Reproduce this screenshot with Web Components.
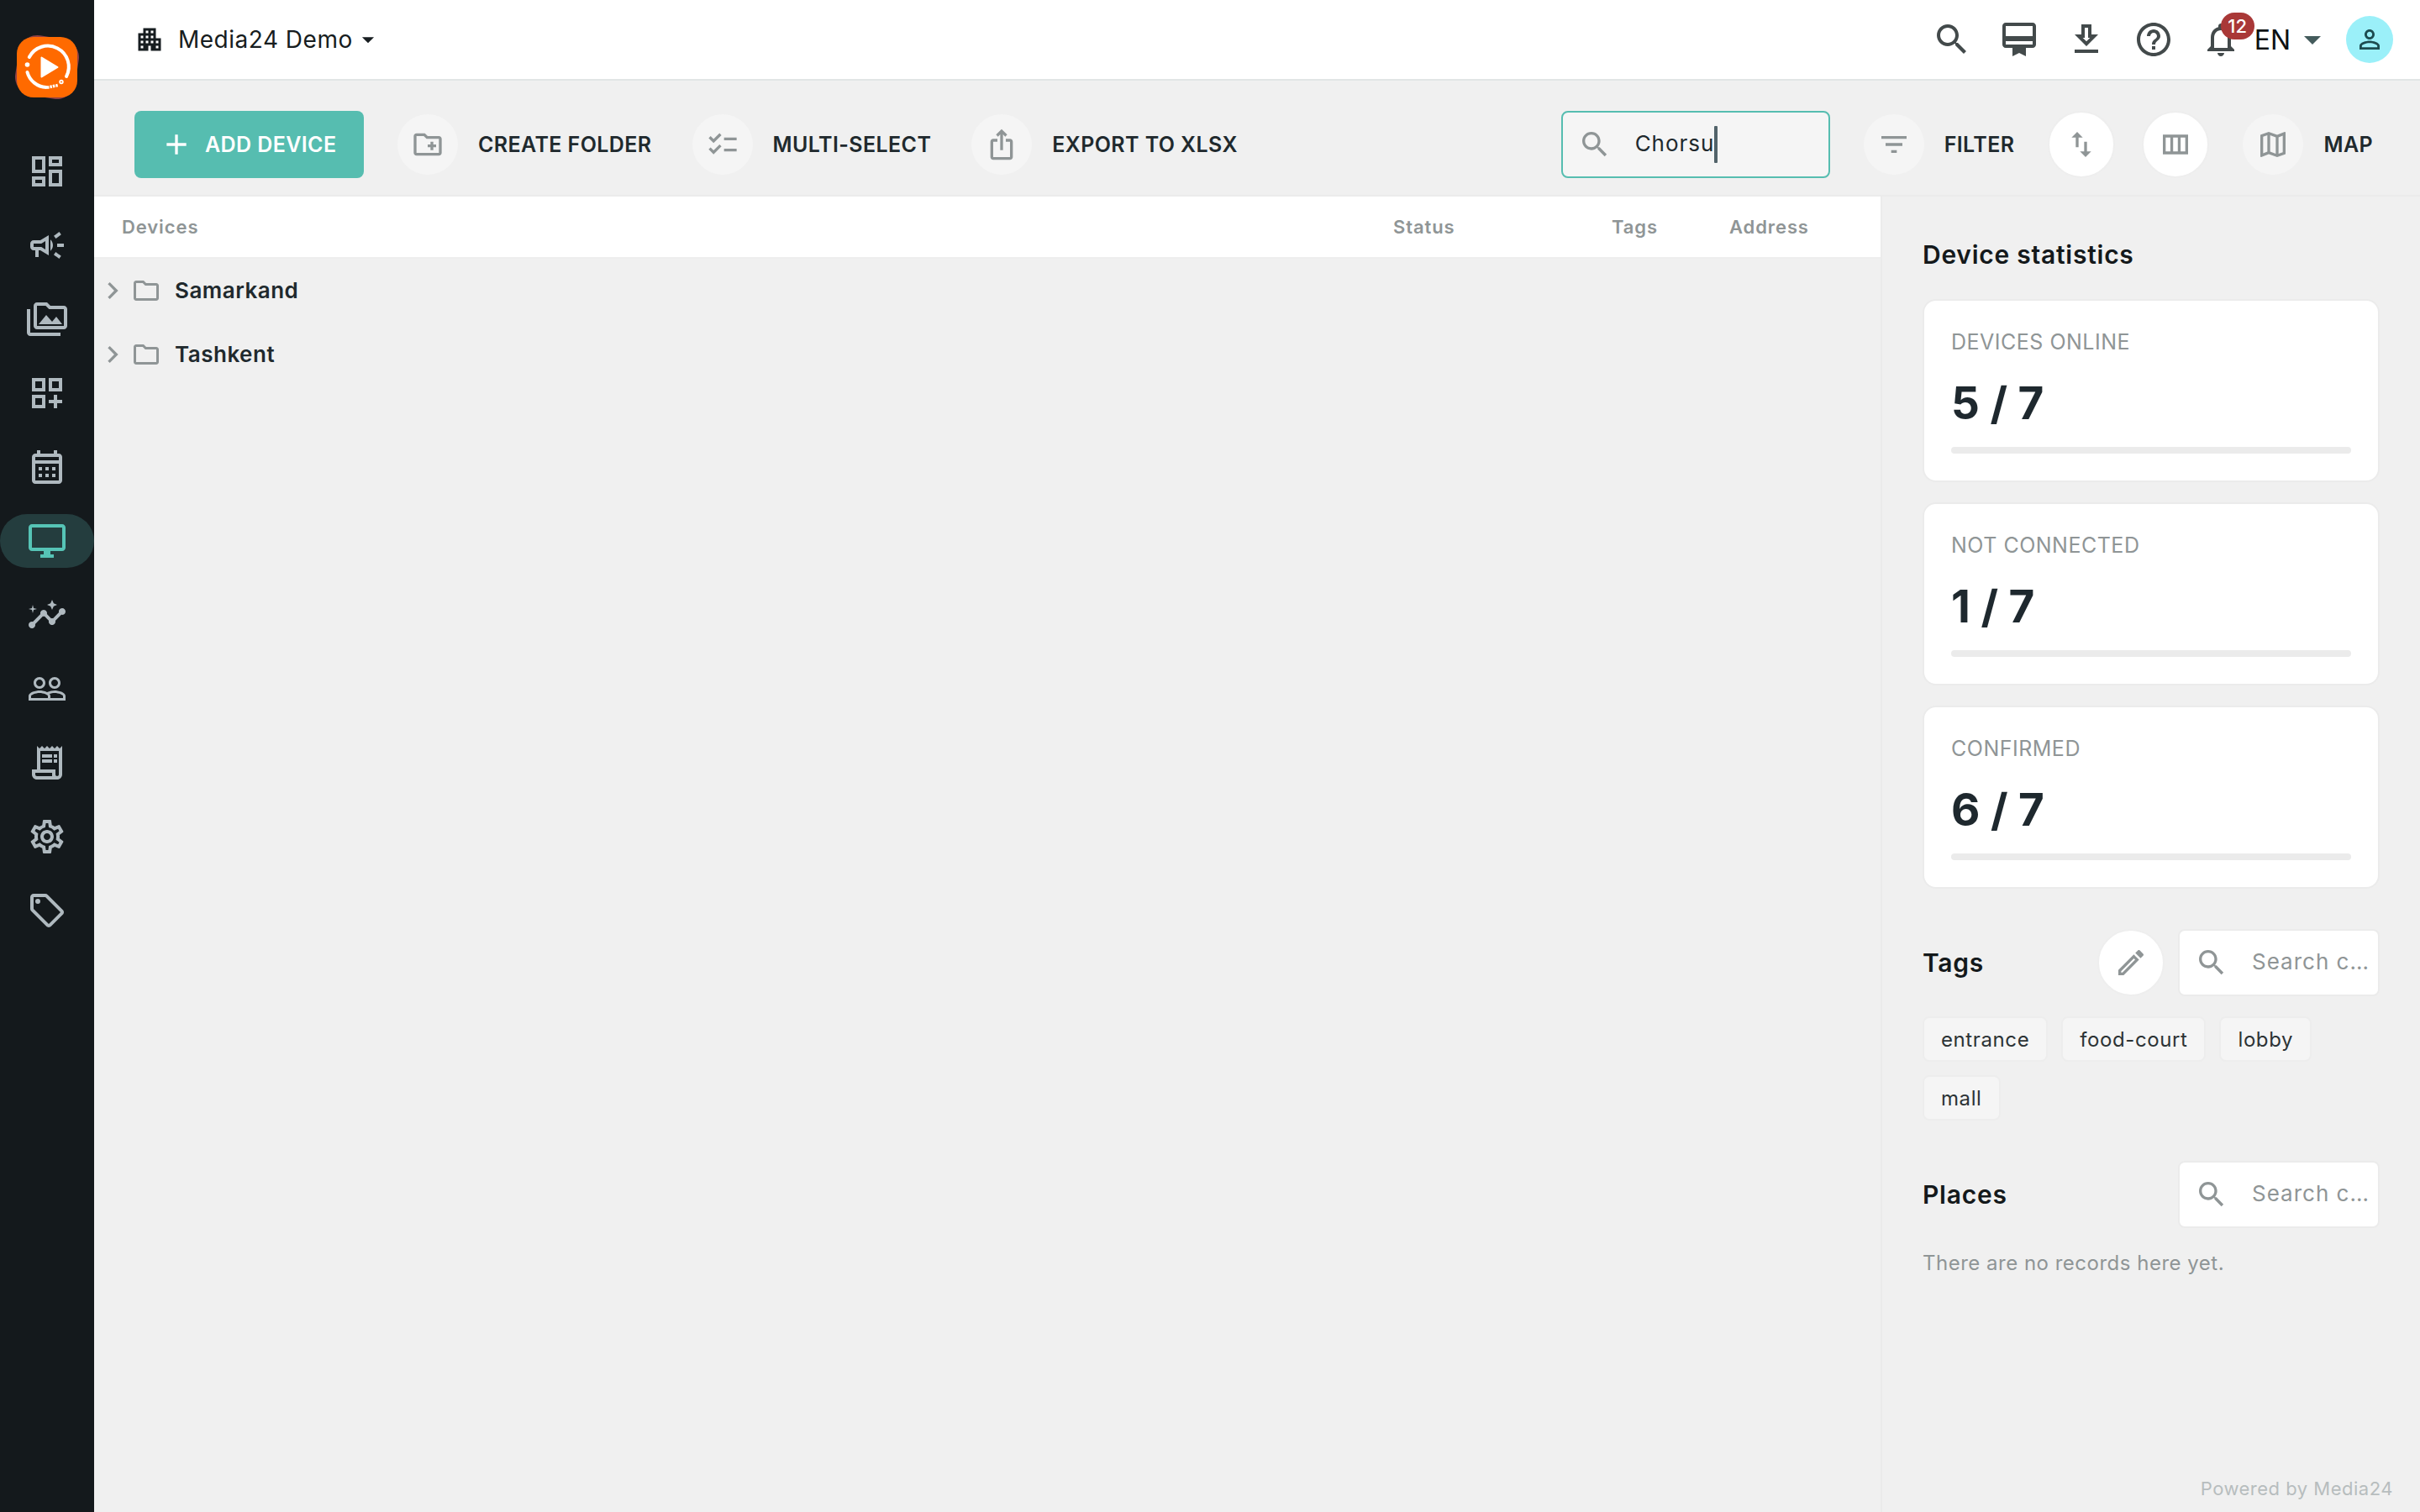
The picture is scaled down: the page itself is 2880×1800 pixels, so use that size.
<!DOCTYPE html>
<html lang="en">
<head>
<meta charset="utf-8">
<title>Devices</title>
<style>
  html, body { margin: 0; height: 100%; }
  body {
    font-family: Inter, "Liberation Sans", sans-serif;
    background: #f0f0f0;
    color: #20292d;
    --muted: #8f9596;
    --line: #ebebeb;
    --accent: #56bdb0;
  }
</style>
</head>
<body>
<device-page></device-page>

<script>
const ICONS = {
  dashboard: "M19 5v2h-4V5h4M9 5v6H5V5h4m10 8v6h-4v-6h4M9 17v2H5v-2h4M21 3h-8v6h8V3zM11 3H3v10h8V3zm10 8h-8v10h8V11zm-10 4H3v6h8v-6z",
  campaign: "M18 11v2h4v-2h-4zm-2 6.61c.96.71 2.21 1.65 3.2 2.39.4-.53.8-1.07 1.2-1.6-.99-.74-2.24-1.68-3.2-2.4-.4.54-.8 1.08-1.2 1.61zM20.4 5.6c-.4-.53-.8-1.07-1.2-1.6-.99.74-2.24 1.68-3.2 2.4.4.53.8 1.07 1.2 1.6.96-.72 2.21-1.65 3.2-2.4zM4 9c-1.1 0-2 .9-2 2v2c0 1.1.9 2 2 2h1v4h2v-4h1l5 3V6L8 9H4zm5.03 1.71L11 9.53v4.94l-1.97-1.18-.48-.29H4v-2h4.55l.48-.29zM15.5 12c0-1.33-.58-2.53-1.5-3.35v6.69c.92-.81 1.5-2.01 1.5-3.34z",
  media: "M2 6H0v14c0 1.1.9 2 2 2h18v-2H2V6zm20-2h-8l-2-2H6c-1.100 0-1.990.9-1.990 2L4 16c0 1.100.9 2 2 2h16c1.100 0 2-.9 2-2V6c0-1.100-.9-2-2-2zm0 12H6V4h5.170l2 2H22v10zM11.500 9.500 7 15h14l-3.500-4.500-2.500 3z",
  widgets: "M3 3v8h8V3H3zm6 6H5V5h4v4zm-6 4v8h8v-8H3zm6 6H5v-4h4v4zM13 3v8h8V3h-8zm6 6h-4V5h4v4zM18 13h-2v3h-3v2h3v3h2v-3h3v-2h-3z",
  calendar: "M19 4h-1V2h-2v2H8V2H6v2H5c-1.110 0-1.990.9-1.990 2L3 20c0 1.100.890 2 2 2h14c1.100 0 2-.9 2-2V6c0-1.100-.9-2-2-2zm0 16H5V10h14v10zm0-12H5V6h14v2zM9 14H7v-2h2v2zm4 0h-2v-2h2v2zm4 0h-2v-2h2v2zm-8 4H7v-2h2v2zm4 0h-2v-2h2v2zm4 0h-2v-2h2v2z",
  monitor: "M21 2H3c-1.100 0-2 .9-2 2v12c0 1.100.9 2 2 2h7v2H8v2h8v-2h-2v-2h7c1.100 0 2-.9 2-2V4c0-1.100-.9-2-2-2zm0 14H3V4h18v12z",
  insights: "M21 8c-1.450 0-2.260 1.440-1.930 2.510l-3.550 3.560c-.3-.09-.74-.09-1.040 0l-2.550-2.550C12.270 10.450 11.460 9 10 9c-1.450 0-2.270 1.440-1.930 2.520l-4.560 4.550C2.440 15.740 1 16.550 1 18c0 1.100.9 2 2 2 1.450 0 2.260-1.440 1.930-2.510l4.550-4.560c.3.09.74.09 1.040 0l2.550 2.550C12.730 16.550 13.540 18 15 18c1.450 0 2.270-1.440 1.930-2.520l3.560-3.550c1.070.33 2.510-.48 2.510-1.930 0-1.100-.9-2-2-2zM15 9l.94-2.070L18 6l-2.060-.93L15 3l-.92 2.070L12 6l2.080.93zM3.500 11 4 9l2-.5L4 8l-.5-2L3 8l-2 .5L3 9z",
  people: "M16.500 13c-1.200 0-3.070.34-4.500 1-1.430-.67-3.300-1-4.500-1C5.330 13 1 14.080 1 16.250V19h22v-2.750c0-2.170-4.330-3.250-6.500-3.250zm-4 4.500h-10v-1.250c0-.54 2.560-1.750 5-1.750s5 1.210 5 1.750v1.250zm9 0H14v-1.250c0-.46-.2-.86-.52-1.220.88-.3 1.960-.53 3.020-.53 2.440 0 5 1.210 5 1.750v1.250zM7.500 12c1.930 0 3.500-1.570 3.500-3.500S9.430 5 7.500 5 4 6.570 4 8.500 5.570 12 7.500 12zm0-5.500c1.100 0 2 .9 2 2s-.9 2-2 2-2-.9-2-2 .9-2 2-2zm9 5.500c1.930 0 3.500-1.570 3.500-3.500S18.430 5 16.500 5 13 6.570 13 8.500s1.570 3.500 3.500 3.500zm0-5.500c1.100 0 2 .9 2 2s-.9 2-2 2-2-.9-2-2 .9-2 2-2z",
  receipt: "M19.500 3.500 18 2l-1.500 1.500L15 2l-1.500 1.500L12 2l-1.500 1.500L9 2 7.500 3.500 6 2v14H3v3c0 1.660 1.340 3 3 3h12c1.660 0 3-1.340 3-3V2l-1.500 1.500zM15 20H6c-.55 0-1-.45-1-1v-1h10v2zm4-1c0 .55-.45 1-1 1s-1-.45-1-1v-3H8V5h11v14zM9 7h6v2H9zm7 0h2v2h-2zm-7 3h6v2H9zm7 0h2v2h-2z",
  settings: "M19.430 12.980c.04-.32.07-.64.07-.98 0-.34-.03-.66-.07-.98l2.110-1.650c.19-.15.24-.42.12-.64l-2-3.460c-.09-.16-.26-.25-.44-.25-.06 0-.12.01-.17.03l-2.490 1c-.52-.4-1.080-.73-1.690-.98l-.38-2.650C14.460 2.180 14.250 2 14 2h-4c-.25 0-.46.18-.49.42l-.38 2.650c-.61.25-1.170.59-1.690.98l-2.490-1c-.06-.02-.12-.03-.18-.03-.17 0-.34.09-.43.25l-2 3.460c-.13.22-.07.49.12.64l2.110 1.650c-.04.32-.07.65-.07.98s.03.66.07.98l-2.110 1.650c-.19.15-.24.42-.12.64l2 3.460c.09.16.26.25.44.25.06 0 .12-.01.17-.03l2.490-1c.52.4 1.080.73 1.690.98l.38 2.650c.03.24.24.42.49.42h4c.25 0 .46-.18.49-.42l.38-2.650c.61-.25 1.170-.59 1.690-.98l2.490 1c.06.02.12.03.18.03.17 0 .34-.09.43-.25l2-3.460c.12-.22.07-.49-.12-.64l-2.110-1.650zm-1.980-1.710c.04.31.05.52.05.73 0 .21-.02.43-.05.73l-.14 1.130.89.7 1.080.84-.7 1.210-1.270-.51-1.040-.42-.9.68c-.43.32-.84.56-1.250.73l-1.060.43-.16 1.130-.2 1.350h-1.400l-.19-1.350-.16-1.130-1.060-.43c-.43-.18-.83-.41-1.230-.71l-.91-.7-1.060.43-1.270.51-.7-1.210 1.080-.84.89-.7-.14-1.130c-.03-.31-.05-.54-.05-.74s.02-.43.05-.73l.14-1.130-.89-.7-1.080-.84.7-1.210 1.270.51 1.040.42.9-.68c.43-.32.84-.56 1.250-.73l1.060-.43.16-1.130.2-1.350h1.390l.19 1.350.16 1.130 1.060.43c.43.18.83.41 1.230.71l.91.7 1.060-.43 1.270-.51.7 1.210-1.070.85-.89.7.14 1.130zM12 8c-2.210 0-4 1.790-4 4s1.790 4 4 4 4-1.790 4-4-1.790-4-4-4zm0 6c-1.100 0-2-.9-2-2s.9-2 2-2 2 .9 2 2-.9 2-2 2z",
  tag: "M21.410 11.580l-9-9C12.050 2.220 11.550 2 11 2H4c-1.100 0-2 .9-2 2v7c0 .55.22 1.050.59 1.420l9 9c.36.36.86.58 1.410.58s1.050-.22 1.410-.59l7-7c.37-.36.59-.86.59-1.410s-.23-1.060-.59-1.420zM13 20.010 4 11V4h7v-.01l9 9-7 7.020zM6.500 5a1.500 1.500 0 1 0 0 3 1.500 1.500 0 1 0 0-3z",
  building: "M17 11V3H7v4H3v14h8v-4h2v4h8V11h-4zM7 19H5v-2h2v2zm0-4H5v-2h2v2zm0-4H5V9h2v2zm4 4H9v-2h2v2zm0-4H9V9h2v2zm0-4H9V5h2v2zm4 8h-2v-2h2v2zm0-4h-2V9h2v2zm0-4h-2V5h2v2zm4 12h-2v-2h2v2zm0-4h-2v-2h2v2z",
  caret: "M7 10l5 5 5-5z",
  search: "M15.500 14h-.79l-.28-.27C15.410 12.590 16 11.110 16 9.500 16 5.910 13.090 3 9.500 3S3 5.910 3 9.500 5.910 16 9.500 16c1.610 0 3.090-.59 4.230-1.570l.27.28v.79l5 4.990L20.490 19l-4.990-5zm-6 0C7.010 14 5 11.990 5 9.500S7.010 5 9.500 5 14 7.010 14 9.500 11.990 14 9.500 14z",
  card: "M20 2H4c-1.110 0-2 .89-2 2v11c0 1.110.89 2 2 2h4v5l4-2 4 2v-5h4c1.110 0 2-.89 2-2V4c0-1.110-.89-2-2-2zm0 13H4v-2h16v2zm0-5H4V4h16v6z",
  download: "M19 9h-4V3H9v6H5l7 7 7-7zm-8 2V5h2v6h1.170L12 13.170 9.830 11H11zm-6 7h14v2H5z",
  help: "M11 18h2v-2h-2v2zm1-16C6.480 2 2 6.480 2 12s4.480 10 10 10 10-4.480 10-10S17.520 2 12 2zm0 18c-4.410 0-8-3.590-8-8s3.590-8 8-8 8 3.590 8 8-3.590 8-8 8zm0-14c-2.210 0-4 1.790-4 4h2c0-1.100.9-2 2-2s2 .9 2 2c0 2-3 1.750-3 5h2c0-2.250 3-2.500 3-5 0-2.210-1.790-4-4-4z",
  bell: "M12 22c1.100 0 2-.9 2-2h-4c0 1.100.9 2 2 2zm6-6v-5c0-3.070-1.630-5.640-4.500-6.320V4c0-.83-.67-1.500-1.500-1.500s-1.500.67-1.500 1.500v.68C7.640 5.360 6 7.920 6 11v5l-2 2v1h16v-1l-2-2zm-2 1H8v-6c0-2.480 1.510-4.500 4-4.500s4 2.020 4 4.500v6z",
  person: "M12 5.900c1.160 0 2.100.94 2.100 2.100s-.94 2.100-2.100 2.100S9.900 9.160 9.900 8s.94-2.100 2.100-2.100m0 9c2.970 0 6.100 1.460 6.100 2.100v1.100H5.900V17c0-.64 3.130-2.100 6.100-2.100M12 4C9.790 4 8 5.790 8 8s1.790 4 4 4 4-1.790 4-4-1.790-4-4-4zm0 9c-2.670 0-8 1.340-8 4v3h16v-3c0-2.660-5.330-4-8-4z",
  plus: "M19 13h-6v6h-2v-6H5v-2h6V5h2v6h6v2z",
  folder: "M9.170 6l2 2H20v10H4V6h5.170M10 4H4c-1.100 0-1.990.9-1.990 2L2 18c0 1.100.9 2 2 2h16c1.100 0 2-.9 2-2V8c0-1.100-.9-2-2-2h-8l-2-2z",
  newFolder: "M20 6h-8l-2-2H4c-1.110 0-1.990.89-1.990 2L2 18c0 1.110.89 2 2 2h16c1.110 0 2-.89 2-2V8c0-1.110-.89-2-2-2zm0 12H4V6h5.170l2 2H20v10zm-8-4h2v2h2v-2h2v-2h-2v-2h-2v2h-2z",
  checklist: "M22 7h-9v2h9V7zm0 8h-9v2h9v-2zM5.540 11 2 7.460l1.410-1.410 2.120 2.120 4.240-4.240 1.410 1.410L5.540 11zm0 8L2 15.460l1.410-1.410 2.120 2.120 4.240-4.240 1.410 1.410L5.540 19z",
  share: "M16 5l-1.420 1.420-1.590-1.590V16h-1.980V4.830L9.420 6.420 8 5l4-4 4 4zm4 5v11c0 1.100-.9 2-2 2H6c-1.110 0-2-.9-2-2V10c0-1.110.89-2 2-2h3v2H6v11h12V10h-3V8h3c1.100 0 2 .89 2 2z",
  filter: "M10 18h4v-2h-4v2zM3 6v2h18V6H3zm3 7h12v-2H6v2z",
  sort: "M9 3 5 6.990h3V14h2V6.990h3L9 3zm7 14.010V10h-2v7.010h-3L15 21l4-3.990h-3z",
  columns: "M3 5v14h18V5H3zm5.330 12H5V7h3.330v10zm5.340 0h-3.340V7h3.340v10zM19 17h-3.330V7H19v10z",
  map: "M20.500 3l-.16.03L15 5.100 9 3 3.360 4.900c-.21.07-.36.25-.36.48V20.500c0 .28.22.5.5.5l.16-.03L9 18.900l6 2.100 5.640-1.900c.21-.07.36-.25.36-.48V3.500c0-.28-.22-.5-.5-.5zM10 5.470l4 1.400v11.660l-4-1.400V5.470zm-5 .99l3-1.010v11.700l-3 1.160V6.460zm14 11.080l-3 1.010V6.860l3-1.160v11.840z",
  chevron: "M10 6 8.590 7.410 13.170 12l-4.580 4.590L10 18l6-6z",
  edit: "M14.060 9.020l.92.92L5.920 19H5v-.92l9.060-9.060M17.660 3c-.25 0-.51.1-.7.29l-1.830 1.830 3.750 3.750 1.830-1.830c.39-.39.39-1.020 0-1.410l-2.340-2.340c-.2-.2-.45-.29-.71-.29zm-3.600 3.190L3 17.250V21h3.750L17.810 9.940l-3.750-3.750z"
};

function define(name, html, setup) {
  const template = document.createElement("template");
  template.innerHTML = html;
  customElements.define(name, class extends HTMLElement {
    connectedCallback() {
      if (this.shadowRoot) return;
      this.attachShadow({ mode: "open" }).append(template.content.cloneNode(true));
      if (setup) setup(this, this.shadowRoot);
    }
  });
}

define("ui-icon", `
  <style>
    :host { display: block; flex: none; width: var(--size, 40px); height: var(--size, 40px); }
    svg { display: block; width: 100%; height: 100%; fill: currentColor; }
  </style>
  <svg viewBox="0 0 24 24"><path fill-rule="evenodd"/></svg>
`, (host, root) => {
  root.querySelector("path").setAttribute("d", ICONS[host.getAttribute("name")]);
});

define("app-logo", `
  <style>
    :host { display: block; width: 80px; height: 80px; }
    svg { display: block; width: 80px; height: 80px; }
  </style>
  <svg viewBox="0 0 80 80">
    <rect x="4" y="4" width="72" height="72" rx="22" fill="#8f4145" transform="rotate(9 40 40)"/>
    <rect x="4" y="4" width="72" height="72" rx="20" fill="#ff6a00"/>
    <g fill="none" stroke="#fff" stroke-width="4" stroke-linecap="round">
      <path d="M18.800 28A24.500 24.500 0 0 1 63 51"/>
      <path d="M16.500 46A24.500 24.500 0 0 0 39 64"/>
      <path d="M40 64.300l13-2.800" stroke-width="3.500" stroke-dasharray="2.500 1" stroke-linecap="butt"/>
      <circle cx="57" cy="57.500" r="1.800" stroke-width="1.800"/>
    </g>
    <circle cx="16.500" cy="37" r="2.800" fill="#fff"/>
    <path d="M33.500 28.500v23l19-11.500z" fill="#fff" stroke="#fff" stroke-width="2" stroke-linejoin="round"/>
  </svg>
`);

define("side-item", `
  <style>
    :host { display: flex; align-items: center; justify-content: center; width: 112px; height: 64px; border-radius: 32px; color: #afb9bf; --size: 48px; }
    :host([active]) { background: #243d3e; color: #56c4b6; }
  </style>
  <ui-icon></ui-icon>
`, (host, root) => root.querySelector("ui-icon").replaceWith(makeIcon(host.getAttribute("icon"))));

function makeIcon(name) {
  const icon = document.createElement("ui-icon");
  icon.setAttribute("name", name);
  return icon;
}

define("side-bar", `
  <style>
    :host { display: flex; flex-direction: column; align-items: center; gap: 24px; box-sizing: border-box; width: 112px; flex: none; padding-top: 40px; background: #14191c; }
    app-logo { margin-bottom: 28px; }
  </style>
  <app-logo></app-logo>
  <slot></slot>
`);

define("top-bar", `
  <style>
    :host { display: flex; align-items: center; flex: none; box-sizing: border-box; height: 96px; padding: 0 32px 0 48px; border-bottom: 2px solid #e1e5e5; background: #fff; color: #434a4b; --size: 48px; }
    .company { display: flex; align-items: center; color: #171d20; font-size: 28px; letter-spacing: .5px; }
    .company ui-icon:first-child { --size: 36px; margin-right: 16px; }
    .company ui-icon:last-child { --size: 34px; margin-left: 1px; }
    .tools { display: flex; align-items: center; gap: 32px; margin-left: auto; }
    .bell { position: relative; }
    .badge { position: absolute; left: 24px; top: -8px; width: 40px; height: 32px; border-radius: 16px; background: #a93837; color: #fff; font: 500 22px/32px Inter, sans-serif; text-align: center; }
    .lang { display: flex; align-items: center; margin-left: 16px; font-size: 32px; color: #0d1112; }
    .lang ui-icon { margin-left: 2px; color: #445b5c; }
    .avatar { display: grid; place-items: center; width: 56px; height: 56px; margin-left: 16px; border-radius: 50%; background: #9bf0f9; color: #1d4b50; --size: 36px; }
  </style>
  <div class="company"><ui-icon name="building"></ui-icon><slot></slot><ui-icon name="caret"></ui-icon></div>
  <div class="tools">
    <ui-icon name="search"></ui-icon>
    <ui-icon name="card"></ui-icon>
    <ui-icon name="download"></ui-icon>
    <ui-icon name="help"></ui-icon>
    <div class="bell"><ui-icon name="bell"></ui-icon><span class="badge">12</span></div>
  </div>
  <div class="lang">EN<ui-icon name="caret"></ui-icon></div>
  <div class="avatar"><ui-icon name="person"></ui-icon></div>
`);

define("round-icon", `
  <style>
    :host { display: grid; place-items: center; flex: none; box-sizing: border-box; width: 72px; height: 72px; border-radius: 50%; background: #f5f5f5; color: var(--muted); }
    :host([solid]) { width: 80px; height: 80px; background: #fff; border: 2px solid #eee; }
  </style>
  <ui-icon></ui-icon>
`, (host, root) => root.querySelector("ui-icon").replaceWith(makeIcon(host.getAttribute("icon"))));

define("text-button", `
  <style>
    :host { display: flex; align-items: center; gap: 24px; font-size: 25px; font-weight: 600; letter-spacing: .4px; white-space: nowrap; }
    :host([primary]) { box-sizing: border-box; width: 273px; height: 80px; padding-left: 30px; gap: 14px; border-radius: 8px; background: var(--accent); color: #fff; }
  </style>
  <slot></slot>
`, (host, root) => {
  const name = host.getAttribute("icon");
  let icon = makeIcon(name);
  if (!host.hasAttribute("primary")) {
    icon = document.createElement("round-icon");
    icon.setAttribute("icon", name);
  }
  root.querySelector("slot").before(icon);
});

define("search-field", `
  <style>
    :host { display: flex; align-items: center; flex: none; box-sizing: border-box; width: 240px; height: 80px; padding-left: 18px; border: 2px solid var(--line); border-radius: 8px; background: #fff; color: var(--muted); font-size: 26px; letter-spacing: 1px; white-space: nowrap; }
    :host([focused]) { width: 320px; border-color: var(--accent); background: #f5f5f5; }
    span { margin-left: 28px; padding-bottom: 3px; }
    :host([focused]) span { color: #20292d; }
    i { display: none; width: 4px; height: 44px; border-radius: 1px; background: #52636a; }
    :host([focused]) i { display: block; }
  </style>
  <ui-icon name="search"></ui-icon><span><slot></slot></span><i></i>
`);

define("tool-bar", `
  <style>
    :host { display: flex; align-items: center; flex: none; box-sizing: border-box; height: 138px; padding: 16px 56px 0 48px; border-bottom: 2px solid var(--line); }
    .left { display: flex; align-items: center; gap: 48px; }
    ::slotted(text-button[primary]) { margin-right: -8px; }
    .right { display: flex; align-items: center; margin-left: auto; }
  </style>
  <div class="left"><slot></slot></div>
  <div class="right"><slot name="right"></slot></div>
`);

define("folder-row", `
  <style>
    :host { display: flex; align-items: center; height: 76px; padding-left: 2px; color: #20292d; font-size: 26px; font-weight: 600; letter-spacing: .5px; }
    ui-icon { color: var(--muted); }
    .folder { --size: 36px; margin: 0 16px 0 2px; }
    span { padding-bottom: 2px; }
  </style>
  <ui-icon name="chevron"></ui-icon><ui-icon class="folder" name="folder"></ui-icon><span><slot></slot></span>
`);

define("device-table", `
  <style>
    :host { display: block; flex: 1; min-width: 0; }
    .head { display: grid; grid-template-columns: 1513px 260px 140px 1fr; align-items: center; box-sizing: border-box; height: 74px; padding-left: 33px; border-bottom: 2px solid #eeeeee; background: #fff; color: var(--muted); font-size: 22px; font-weight: 600; letter-spacing: .9px; }
  </style>
  <div class="head"><span>Devices</span><span>Status</span><span>Tags</span><span>Address</span></div>
  <slot></slot>
`);

define("stat-card", `
  <style>
    :host { display: flex; flex-direction: column; box-sizing: border-box; height: 218px; padding: 32px; border: 2px solid var(--line); border-radius: 16px; background: #fff; }
    .label { color: var(--muted); font-size: 25px; line-height: 35px; letter-spacing: .5px; }
    .value { margin-top: 21px; font-size: 53px; font-weight: 700; line-height: 68px; color: #1e282e; }
    .track { height: 8px; margin-top: auto; border-radius: 4px; background: var(--line); }
  </style>
  <div class="label"><slot></slot></div>
  <div class="value"><slot name="value"></slot></div>
  <div class="track"></div>
`);

define("section-head", `
  <style>
    :host { display: flex; align-items: center; gap: 16px; height: 80px; }
    h2 { margin: 0 auto 0 0; font-size: 30px; font-weight: 600; letter-spacing: .75px; color: #14191b; }
  </style>
  <h2><slot></slot></h2>
  <slot name="actions"></slot>
`);

define("tag-chip", `
  <style>
    :host { box-sizing: border-box; height: 54px; padding: 1px 20px 0; border: 2px solid #ededed; border-radius: 8px; background: #f5f5f5; color: #2c3335; font-size: 24px; line-height: 50px; letter-spacing: .6px; }
  </style>
  <slot></slot>
`);

define("stats-panel", `
  <style>
    :host { display: flex; flex-direction: column; flex: none; box-sizing: border-box; width: 642px; padding: 29px 48px 0; border-left: 2px solid var(--line); }
    .cards { display: grid; gap: 24px; margin: 13px 0 48px; }
    .tags { display: flex; flex-wrap: wrap; gap: 16px; margin: 24px 0 48px; }
    .empty { margin: 26px 0 0; font-size: 24px; line-height: 32px; letter-spacing: .5px; color: var(--muted); }
    .footer { margin: auto -16px 12px; text-align: right; font-size: 22px; line-height: 32px; letter-spacing: .5px; color: #b7bdbe; }
  </style>
  <section-head>Device statistics</section-head>
  <div class="cards">
    <stat-card>DEVICES ONLINE<span slot="value">5 / 7</span></stat-card>
    <stat-card>NOT CONNECTED<span slot="value">1 / 7</span></stat-card>
    <stat-card>CONFIRMED<span slot="value">6 / 7</span></stat-card>
  </div>
  <section-head>Tags
    <round-icon slot="actions" icon="edit" solid></round-icon>
    <search-field slot="actions">Search c…</search-field>
  </section-head>
  <div class="tags">
    <tag-chip>entrance</tag-chip>
    <tag-chip>food-court</tag-chip>
    <tag-chip>lobby</tag-chip>
    <tag-chip>mall</tag-chip>
  </div>
  <section-head>Places<search-field slot="actions">Search c…</search-field></section-head>
  <p class="empty">There are no records here yet.</p>
  <div class="footer">Powered by Media24</div>
`);

define("device-page", `
  <style>
    :host { display: flex; width: 2880px; height: 1800px; overflow: hidden; }
    main { display: flex; flex-direction: column; flex: 1; min-width: 0; }
    .content { display: flex; flex: 1; min-height: 0; }
    search-field { margin-right: 40px; }
    .filter { margin-right: 40px; }
    round-icon { margin-right: 32px; }
    .map { margin-left: 8px; }
  </style>
  <side-bar>
    <side-item icon="dashboard"></side-item>
    <side-item icon="campaign"></side-item>
    <side-item icon="media"></side-item>
    <side-item icon="widgets"></side-item>
    <side-item icon="calendar"></side-item>
    <side-item icon="monitor" active></side-item>
    <side-item icon="insights"></side-item>
    <side-item icon="people"></side-item>
    <side-item icon="receipt"></side-item>
    <side-item icon="settings"></side-item>
    <side-item icon="tag"></side-item>
  </side-bar>
  <main>
    <top-bar>Media24 Demo</top-bar>
    <tool-bar>
      <text-button icon="plus" primary>ADD DEVICE</text-button>
      <text-button icon="newFolder">CREATE FOLDER</text-button>
      <text-button icon="checklist">MULTI-SELECT</text-button>
      <text-button icon="share">EXPORT TO XLSX</text-button>
      <search-field slot="right" focused>Chorsu</search-field>
      <text-button slot="right" class="filter" icon="filter">FILTER</text-button>
      <round-icon slot="right" icon="sort" solid></round-icon>
      <round-icon slot="right" icon="columns" solid></round-icon>
      <text-button slot="right" class="map" icon="map">MAP</text-button>
    </tool-bar>
    <div class="content">
      <device-table>
        <folder-row>Samarkand</folder-row>
        <folder-row>Tashkent</folder-row>
      </device-table>
      <stats-panel></stats-panel>
    </div>
  </main>
`);
</script>
</body>
</html>
